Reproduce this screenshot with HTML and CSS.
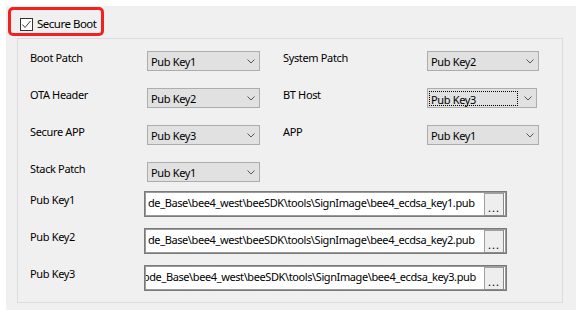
FILE: index.html
```html
<!DOCTYPE html>
<html>
<head>
<meta charset="utf-8">
<link rel="stylesheet" href="styles.css">
</head>
<body>
<div class="panel">
  <div class="secure-box">
    <span class="checkbox">
      <svg width="11" height="11" viewBox="0 0 11 11"><polyline points="1.5,5.5 4,8.5 9.5,2" fill="none" stroke="#3c3c3c" stroke-width="1"/></svg>
    </span>
    <span class="secure-label">Secure Boot</span>
  </div>
  <div class="group">
    <div class="combo-grid">
      <span class="label">Boot Patch</span>
      <div class="combo"><span class="combo-text">Pub Key1</span><svg class="chev" width="8" height="5" viewBox="0 0 8 5"><polyline points="0.5,0.5 4,4 7.5,0.5" fill="none" stroke="#555" stroke-width="1"/></svg></div>
      <span></span>
      <span class="label">System Patch</span>
      <div class="combo"><span class="combo-text">Pub Key2</span><svg class="chev" width="8" height="5" viewBox="0 0 8 5"><polyline points="0.5,0.5 4,4 7.5,0.5" fill="none" stroke="#555" stroke-width="1"/></svg></div>

      <span class="label">OTA Header</span>
      <div class="combo"><span class="combo-text">Pub Key2</span><svg class="chev" width="8" height="5" viewBox="0 0 8 5"><polyline points="0.5,0.5 4,4 7.5,0.5" fill="none" stroke="#555" stroke-width="1"/></svg></div>
      <span></span>
      <span class="label">BT Host</span>
      <div class="combo combo-focus"><span class="combo-text focus-rect">Pub Key3</span><svg class="chev" width="8" height="5" viewBox="0 0 8 5"><polyline points="0.5,0.5 4,4 7.5,0.5" fill="none" stroke="#555" stroke-width="1"/></svg></div>

      <span class="label">Secure APP</span>
      <div class="combo"><span class="combo-text">Pub Key3</span><svg class="chev" width="8" height="5" viewBox="0 0 8 5"><polyline points="0.5,0.5 4,4 7.5,0.5" fill="none" stroke="#555" stroke-width="1"/></svg></div>
      <span></span>
      <span class="label">APP</span>
      <div class="combo"><span class="combo-text">Pub Key1</span><svg class="chev" width="8" height="5" viewBox="0 0 8 5"><polyline points="0.5,0.5 4,4 7.5,0.5" fill="none" stroke="#555" stroke-width="1"/></svg></div>

      <span class="label">Stack Patch</span>
      <div class="combo"><span class="combo-text">Pub Key1</span><svg class="chev" width="8" height="5" viewBox="0 0 8 5"><polyline points="0.5,0.5 4,4 7.5,0.5" fill="none" stroke="#555" stroke-width="1"/></svg></div>
    </div>

    <div class="fields">
      <div class="field-row">
        <span class="label field-label">Pub Key1</span>
        <div class="field">
          <div class="field-text"><span>de_Base\bee4_west\beeSDK\tools\SignImage\bee4_ecdsa_key1.pub</span></div>
          <div class="browse">...</div>
        </div>
      </div>
      <div class="field-row">
        <span class="label field-label">Pub Key2</span>
        <div class="field">
          <div class="field-text"><span>de_Base\bee4_west\beeSDK\tools\SignImage\bee4_ecdsa_key2.pub</span></div>
          <div class="browse">...</div>
        </div>
      </div>
      <div class="field-row">
        <span class="label field-label">Pub Key3</span>
        <div class="field">
          <div class="field-text"><span class="shift">ode_Base\bee4_west\beeSDK\tools\SignImage\bee4_ecdsa_key3.pub</span></div>
          <div class="browse">...</div>
        </div>
      </div>
    </div>
  </div>
</div>
</body>
</html>
```

FILE: styles.css
```css
html, body {
  margin: 0;
  padding: 0;
  background: #ffffff;
}
body {
  font-family: "Noto Sans", "Open Sans", sans-serif;
  font-size: 11px;
  letter-spacing: -0.35px;
  color: #000;
}
.panel {
  margin: 6px 0 0 6px;
  width: 570px;
  height: 304px;
  background: #f0f0f0;
  overflow: hidden;
}
.secure-box {
  box-sizing: border-box;
  margin: 1px 0 0 2px;
  width: 96px;
  height: 29px;
  border: 3px solid #f42020;
  border-radius: 5px;
  display: flex;
  align-items: flex-start;
  padding: 8px 0 0 9px;
}
.checkbox {
  box-sizing: border-box;
  width: 13px;
  height: 13px;
  border: 1px solid #333;
  background: #fff;
  display: flex;
}
.secure-label {
  margin-left: 4px;
  line-height: 14px;
  margin-top: -1px;
  font-size: 11.5px;
  letter-spacing: -0.5px;
}
.group {
  box-sizing: border-box;
  margin: 2px 0 0 11px;
  width: 546px;
  height: 265px;
  border: 1px solid #dcdcdc;
  padding: 12px 0 0 12px;
}
.combo-grid {
  display: grid;
  grid-template-columns: 117px 113px 23px 144px 112px;
  grid-auto-rows: 20px;
  row-gap: 17px;
}
.label {
  line-height: 14px;
  white-space: nowrap;
}
.combo {
  box-sizing: border-box;
  height: 20px;
  border: 1px solid #adadad;
  background: #e1e1e1;
  display: flex;
  align-items: center;
  padding-left: 3px;
  padding-right: 4px;
}
.combo-text {
  flex: 1;
  line-height: 18px;
  padding-top: 1px;
  white-space: nowrap;
}
.combo-focus {
  width: 110px;
  padding-left: 1px;
}
.focus-rect {
  flex: none;
  box-sizing: border-box;
  width: 89px;
  height: 15px;
  line-height: 13px;
  padding: 1px 0 0 1px;
  border: 1px dotted #000;
  margin-right: auto;
}
.chev {
  flex: none;
}
.fields {
  margin-top: 9px;
  display: flex;
  flex-direction: column;
  gap: 11px;
}
.field-row {
  display: flex;
  align-items: flex-start;
}
.field-label {
  width: 114px;
  padding-top: 2px;
}
.field {
  box-sizing: border-box;
  width: 363px;
  height: 26px;
  border: 1px solid #7a7a7a;
  box-shadow: inset 0 0 0 1px #9a9a9a;
  background: #fff;
  display: flex;
  padding: 1px;
}
.field-text {
  flex: 1;
  overflow: hidden;
  white-space: nowrap;
  line-height: 20px;
  padding-left: 2px;
  letter-spacing: -0.4px;
  background: #fff;
}
.shift {
  display: inline-block;
  margin-left: -5px;
}
.browse {
  box-sizing: border-box;
  width: 20px;
  height: 23px;
  margin-right: 1px;
  border: 1px solid #a0a0a0;
  border-right-color: #8a8a8a;
  border-bottom-color: #8a8a8a;
  background: #eeeeee;
  font-size: 11px;
  line-height: 28px;
  letter-spacing: 1px;
  text-align: center;
  overflow: hidden;
  color: #000;
}
```
